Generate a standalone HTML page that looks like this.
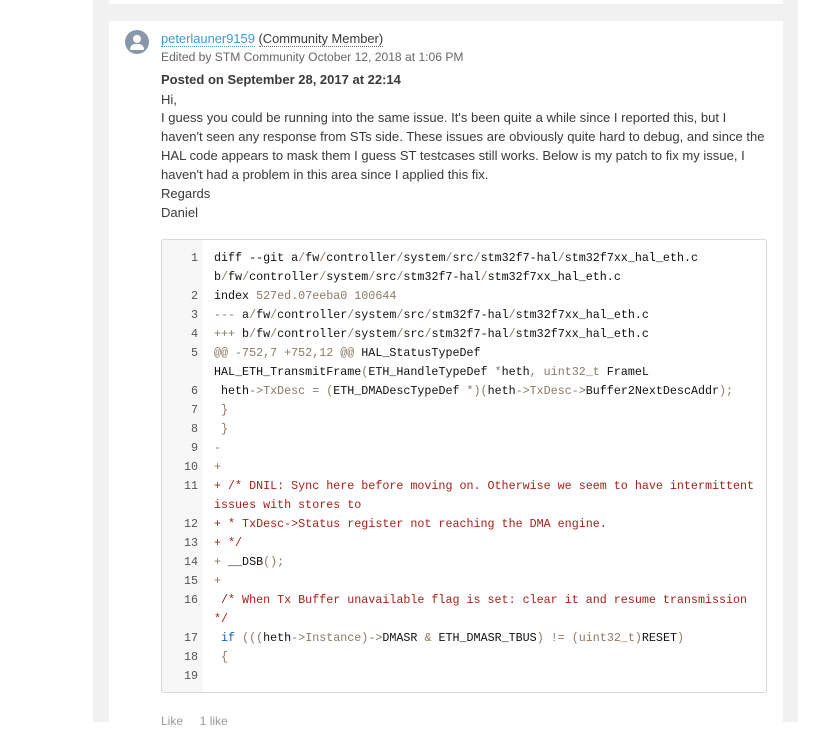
<!DOCTYPE html>
<html><head><meta charset="utf-8"><style>
*{margin:0;padding:0;box-sizing:border-box}
body{width:820px;height:722px;background:#fff;position:relative;overflow:hidden;font-family:"Liberation Sans",Arial,sans-serif}
.col{position:absolute;left:93px;top:0;width:705px;height:722px;background:#f1f1f1}
.card0{position:absolute;left:109px;top:0;width:674px;height:4px;background:#fff}
.card{position:absolute;left:109px;top:21px;width:674px;height:710px;background:#fff}
.av{position:absolute;left:125px;top:30px;width:24px;height:24px;border-radius:50%;background:#8897a9;overflow:hidden}
.t{position:absolute;left:161px;font-size:13.05px;color:#3a3a3a;white-space:nowrap}
.code{position:absolute;left:161px;top:239px;width:606px;height:454px;border:1px solid #d6d6d6;border-radius:3px;background:#fff;overflow:hidden}
.gut{position:absolute;left:0;top:0;width:41px;height:100%;background:#f7f7f7}
.lines{position:absolute;left:0;top:9px;width:100%;font-family:"Liberation Mono","Noto Sans CJK SC",monospace;font-size:11.7px;line-height:19px;color:#111}
.r{position:relative;height:19px;padding-left:52px;white-space:pre}
.n{position:absolute;left:0;width:36px;text-align:right;color:#555;font-family:"Liberation Mono",monospace}
.p{color:#8a7a68}.c{color:#a8201a}.k{color:#1f5fa8}
</style></head><body>
<div class="col"></div><div class="card0"></div><div class="card"></div>
<div class="av"><div style="position:absolute;left:8px;top:5px;width:8px;height:8px;border-radius:50%;background:#fff"></div><div style="position:absolute;left:5px;top:14px;width:14px;height:6px;border-radius:6px 6px 1px 1px;background:#fff"></div></div>
<div class="t" style="top:31px;font-size:12.9px"><span style="color:#3c9ad6;border-bottom:1px dotted #3c9ad6">peterlauner9159</span> <span style="border-bottom:1px dotted #666">(Community Member)</span></div>
<div class="t" style="top:50px;font-size:12.1px;color:#666">Edited by STM Community October 12, 2018 at 1:06 PM</div>
<div class="t" style="top:72px;font-weight:bold;font-size:13px">Posted on September 28, 2017 at 22:14</div>
<div class="t" style="top:92px">Hi,</div>
<div class="t" style="top:110px">I guess you could be running into the same issue. It's been quite a while since I reported this, but I</div>
<div class="t" style="top:129px">haven't seen any response from STs side. These issues are obviously quite hard to debug, and since the</div>
<div class="t" style="top:148px">HAL code appears to mask them I guess ST testcases still works. Below is my patch to fix my issue, I</div>
<div class="t" style="top:167px">haven't had a problem in this area since I applied this fix.</div>
<div class="t" style="top:186px">Regards</div>
<div class="t" style="top:205px">Daniel</div>
<div class="code"><div class="gut"></div><div class="lines">
<div class="r"><span class="n">1</span>diff --git a<span class="p">/</span>fw<span class="p">/</span>controller<span class="p">/</span>system<span class="p">/</span>src<span class="p">/</span>stm32f7-hal<span class="p">/</span>stm32f7xx_hal_eth.c</div>
<div class="r">b<span class="p">/</span>fw<span class="p">/</span>controller<span class="p">/</span>system<span class="p">/</span>src<span class="p">/</span>stm32f7-hal<span class="p">/</span>stm32f7xx_hal_eth.c</div>
<div class="r"><span class="n">2</span>index <span class="p">527ed.07eeba0 100644</span></div>
<div class="r"><span class="n">3</span><span class="p">---</span> a<span class="p">/</span>fw<span class="p">/</span>controller<span class="p">/</span>system<span class="p">/</span>src<span class="p">/</span>stm32f7-hal<span class="p">/</span>stm32f7xx_hal_eth.c</div>
<div class="r"><span class="n">4</span><span class="p">+++</span> b<span class="p">/</span>fw<span class="p">/</span>controller<span class="p">/</span>system<span class="p">/</span>src<span class="p">/</span>stm32f7-hal<span class="p">/</span>stm32f7xx_hal_eth.c</div>
<div class="r"><span class="n">5</span><span class="p">@@ -752,7 +752,12 @@</span> HAL_StatusTypeDef</div>
<div class="r">HAL_ETH_TransmitFrame<span class="p">(</span>ETH_HandleTypeDef <span class="p">*</span>heth<span class="p">, uint32_t</span> FrameL</div>
<div class="r"><span class="n">6</span> heth<span class="p">-&gt;TxDesc = (</span>ETH_DMADescTypeDef <span class="p">*)(</span>heth<span class="p">-&gt;TxDesc-&gt;</span>Buffer2NextDescAddr<span class="p">);</span></div>
<div class="r"><span class="n">7</span><span class="p"> }</span></div>
<div class="r"><span class="n">8</span><span class="p"> }</span></div>
<div class="r"><span class="n">9</span><span class="p">-</span></div>
<div class="r"><span class="n">10</span><span class="p">+</span></div>
<div class="r"><span class="n">11</span><span class="c">+ /* DNIL: Sync here before moving on. Otherwise we seem to have intermittent</span></div>
<div class="r"><span class="c">issues with stores to</span></div>
<div class="r"><span class="n">12</span><span class="c">+ * TxDesc-&gt;Status register not reaching the DMA engine.</span></div>
<div class="r"><span class="n">13</span><span class="c">+ */</span></div>
<div class="r"><span class="n">14</span><span class="p">+</span> __DSB<span class="p">();</span></div>
<div class="r"><span class="n">15</span><span class="p">+</span></div>
<div class="r"><span class="n">16</span><span class="c"> /* When Tx Buffer unavailable flag is set: clear it and resume transmission</span></div>
<div class="r"><span class="c">*/</span></div>
<div class="r"><span class="n">17</span> <span class="k">if</span> <span class="p">(((</span>heth<span class="p">-&gt;Instance)-&gt;</span>DMASR <span class="p">&amp;</span> ETH_DMASR_TBUS<span class="p">) != (uint32_t)</span>RESET<span class="p">)</span></div>
<div class="r"><span class="n">18</span><span class="p"> {</span></div>
<div class="r"><span class="n">19</span></div>
</div></div>
<div class="t" style="top:714px;color:#999;font-size:12px">Like &nbsp; &nbsp; 1 like</div>
</body></html>
